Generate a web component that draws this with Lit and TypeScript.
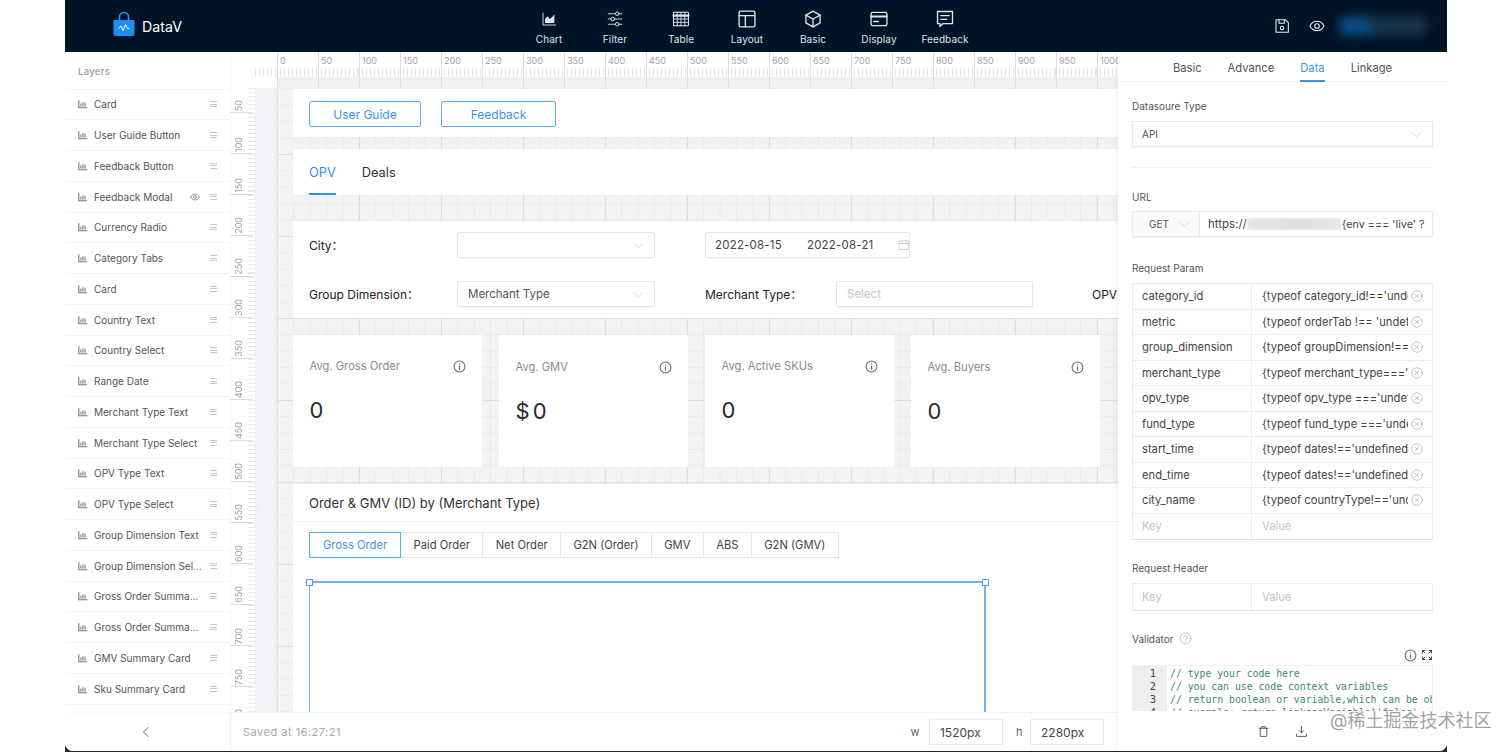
import { LitElement, html, css, svg } from "lit";
import { customElement } from "lit/decorators.js";

const layers = ["Card","User Guide Button","Feedback Button","Feedback Modal","Currency Radio","Category Tabs","Card","Country Text","Country Select","Range Date","Merchant Type Text","Merchant Type Select","OPV Type Text","OPV Type Select","Group Dimension Text","Group Dimension Select","Gross Order Summary Card","Gross Order Summary Card","GMV Summary Card","Sku Summary Card"];
const params = [
  ["category_id","{typeof category_id!=='undefined'"],
  ["metric","{typeof orderTab !== 'undefined'"],
  ["group_dimension","{typeof groupDimension!=='undefined'"],
  ["merchant_type","{typeof merchant_type==='undefined'"],
  ["opv_type","{typeof opv_type ==='undefined'"],
  ["fund_type","{typeof fund_type ==='undefined'"],
  ["start_time","{typeof dates!=='undefined'"],
  ["end_time","{typeof dates!=='undefined'"],
  ["city_name","{typeof countryType!=='undefined'"],
];
const cards = [["Avg. Gross Order","0",false],["Avg. GMV","$ 0",true],["Avg. Active SKUs","0",false],["Avg. Buyers","0",true]] as const;
const chartTabs = ["Gross Order","Paid Order","Net Order","G2N (Order)","GMV","ABS","G2N (GMV)"];
const hLabels = Array.from({length:21},(_,i)=>i*50);
const vLabels = Array.from({length:16},(_,i)=>(i+1)*50);

const s = (size:number, body:unknown, cls="") => html`<svg class=${cls} width=${size} height=${size} viewBox="0 0 24 24" fill="none" stroke="currentColor" stroke-width="1.6" stroke-linecap="round" stroke-linejoin="round">${body}</svg>`;
const navIcons: Record<string,[number,unknown]> = {
  Chart:[16,svg`<path d="M3 3v18h19" stroke-width="1.4"/><path d="M6 18v-6l4-4 3 4 4-3 3-4v13z" fill="currentColor" stroke="none"/>`],
  Filter:[18,svg`<path d="M3 5h18M3 12h18M3 19h18" stroke-width="1.2"/><circle cx="15" cy="5" r="2.4" fill="#001428" stroke-width="1.3"/><circle cx="9" cy="12" r="2.4" fill="#001428" stroke-width="1.3"/><circle cx="15" cy="19" r="2.4" fill="#001428" stroke-width="1.3"/>`],
  Table:[18,svg`<rect x="2" y="3" width="20" height="18" rx="1" stroke-width="1.4"/><path d="M2 7.5h20" stroke-width="3"/><path d="M2 12h20M2 16.5h20M7 3v18M12 3v18M17 3v18" stroke-width="1.2"/>`],
  Layout:[20,svg`<rect x="2.5" y="2.5" width="19" height="19" rx="2"/><path d="M2.5 8h19M10 8v13.5"/>`],
  Basic:[20,svg`<path d="M12 2.5l8.5 4.8v9.4L12 21.5l-8.5-4.8V7.3z"/><path d="M3.5 7.3L12 12l8.5-4.7M12 12v9.5"/>`],
  Display:[20,svg`<rect x="2.5" y="4" width="19" height="16" rx="2"/><path d="M2.5 9h19" stroke-width="2.2"/><path d="M6 15h5" stroke-width="2"/>`],
  Feedback:[20,svg`<path d="M3 3h18v14.5H9.5L6 21v-3.500H3z"/><path d="M7 8h10M7 12.500h7"/>`],
};
const chartIco = () => s(10,svg`<path d="M2 3v18h20M7 18v-7M12 18V8M17 18v-9" stroke-width="2.6" stroke-linecap="butt"/>`,"lico");
const grip = () => html`<span class="grip"></span>`;
const chev = () => s(11,svg`<path d="M3 8l9 9 9-9" stroke-width="1.2"/>`,"chev");
const info = () => s(13,svg`<circle cx="12" cy="12" r="10" stroke-width="1.9"/><path d="M12 11v6M12 7v.5" stroke-width="2"/>`,"info");
const xc = () => s(12,svg`<circle cx="12" cy="12" r="10.500" stroke-width="1.3"/><path d="M8.500 8.500l7 7M15.500 8.500l-7 7" stroke-width="1.3"/>`,"xc");

@customElement("app-root")
export class AppRoot extends LitElement {
  static styles = css`
    :host{display:block;width:1512px;height:752px;background:#fff;font-family:Inter,"Noto Sans CJK SC",sans-serif;color:#333;overflow:hidden;position:relative}
    *{box-sizing:border-box}
    svg{display:block;flex:none}
    .app{margin:0 65px;height:752px;background:#1f2430;display:flex;flex-direction:column;border-radius:0}
    header{height:52px;flex:none;background:#001428;display:flex;align-items:center;color:#e8edf2}
    .logo{width:451px;padding-left:48px;display:flex;align-items:center;gap:7px;font-size:14.200px;color:#fff}
    .logo svg{margin-bottom:4px}
    nav{display:flex}
    .ni{width:66px;height:52px;display:flex;flex-direction:column;align-items:center;font-size:10px;letter-spacing:.1px;color:#dfe5eb}
    .ni .ic{height:33px;display:flex;align-items:center;padding-top:5px}
    .ni span{line-height:12px}
    .acts{margin-left:auto;display:flex;align-items:center;width:165px;padding-left:9px;gap:19px;margin-right:17px}
    .blur{width:88px;height:20px;border-radius:8px;margin-left:-5px;background:linear-gradient(90deg,#0c4a80 0 30%,#18334c 40% 100%);filter:blur(5px)}
    .main{flex:1;display:flex;background:#fff;border-radius:0 0 8px 8px;overflow:hidden;margin-bottom:1px;min-height:0}
    .left{width:165px;flex:none;display:flex;flex-direction:column;background:#fff;box-shadow:1px 0 2px rgba(0,0,0,.04);z-index:2}
    .ltitle{height:37.500px;flex:none;padding:14px 0 0 13px;font-size:9.500px;font-weight:500;color:#9a9a9a;letter-spacing:.3px;border-bottom:1px solid #f5f5f5}
    .row{height:30.750px;flex:none;display:flex;align-items:center;padding:0 13px;border-bottom:1px solid #f5f5f5;font-size:10px;color:#555;gap:6px}
    .row .nm{flex:1;min-width:0;white-space:nowrap;overflow:hidden;text-overflow:ellipsis}
    .lico{color:#777}
    .grip{width:7px;height:6px;flex:none;margin-left:2px;border-top:1px solid #c6c6c6;border-bottom:1px solid #c6c6c6;position:relative}
    .grip::after{content:"";position:absolute;left:0;right:0;top:1.500px;height:1px;background:#c6c6c6}
    .eye{color:#888;margin-right:2px}
    .lfoot{margin-top:auto;height:39px;flex:none;display:flex;align-items:center;justify-content:center;color:#333;border-top:1px solid #fafafa;padding-right:4px}
    .center{flex:1;min-width:0;display:flex;flex-direction:column}
    .stage{flex:1;min-height:0;display:grid;grid-template-columns:47px 1fr;grid-template-rows:36px 1fr;overflow:hidden}
    .hr{grid-column:1 / 3;display:flex;padding-left:47px;overflow:hidden;background:
      linear-gradient(#fff,#fff) 0 0 / 25px 100% no-repeat,
      repeating-linear-gradient(90deg,#e8e8e8 0 1px,transparent 1px 4.100px) 25px 16px / 100% 9px no-repeat,
      linear-gradient(90deg,#fff 0 47px,#f0f0f0 47px) 0 25px / 100% 11px no-repeat,
      #fff}
    .hr div{width:41px;flex:none;border-left:1px solid #dedede;font-size:9px;color:#a3a3a3;padding:4px 0 0 2px;line-height:10px}
    .vr{overflow:hidden;background:
      repeating-linear-gradient(180deg,#e8e8e8 0 1px,transparent 1px 4.100px) 18px 0 / 7px 100% no-repeat,
      linear-gradient(90deg,#fff 0 25px,#f0f1f4 25px,#f4f5f7 40px,#eceded 47px)}
    .vr div{height:41px;width:23px;border-bottom:1px solid #dedede;font-size:9px;color:#a3a3a3;display:flex;align-items:flex-end;padding:0 0 1px 4px}
    .vr div:first-child{height:25px}
    .vr div span{writing-mode:vertical-rl;transform:rotate(180deg);line-height:10px;display:block}
    .page{min-width:0;overflow:hidden;padding:1px 0 0 16px;background-color:#f3f3f3;background-image:
      linear-gradient(90deg,#dedede 1px,transparent 1px),linear-gradient(180deg,#dedede 1px,transparent 1px),
      linear-gradient(90deg,#eaeaea 1px,transparent 1px),linear-gradient(180deg,#eaeaea 1px,transparent 1px);
      background-size:82px 82px,82px 82px,16.400px 16.400px,16.400px 16.400px;background-position:0 66px}
    .sec{background:#fff;margin-left:0}
    .btns{height:48px;display:flex;align-items:center;gap:20px;padding:2px 0 0 16px;margin-bottom:12px}
    .btn{height:26px;border:1px solid #5aaef0;border-radius:2px;color:#3a95ea;font-size:12px;display:flex;align-items:center;justify-content:center;width:112px}
    .btn.b2{width:115px}
    .tabs{height:46px;display:flex;gap:26px;padding-left:16px;margin-bottom:26px;font-size:12.800px;color:#333}
    .tabs div{height:46px;display:flex;align-items:center;border-bottom:2px solid transparent;padding-top:2px}
    .tabs .on{color:#2f8fea;border-bottom-color:#2f8fea}
    .filters{height:97px;padding:11px 0 0 16px;display:grid;grid-template-columns:148px 198px 50px 131px 197px 59px 60px;grid-template-rows:26px 26px;row-gap:23px;margin-bottom:17px;font-size:12px;color:#222;align-items:center;white-space:nowrap}
    .fl{padding-bottom:2px}
    .inp{height:26px;border:1px solid #e6e6e6;box-shadow:0 1px 1px rgba(0,0,0,.03);border-radius:2px;display:flex;align-items:center;padding:0 10px;font-size:11.500px;color:#555}
    .chev{color:#bbb}
    .inp .chev{margin-left:auto}
    .date{width:205px;grid-column:span 3;color:#444;font-size:11.500px;padding:0 9px;letter-spacing:.2px;gap:25px}
    .date svg{color:#bbb;margin-left:auto}
    .ph{color:#c4c4c4}
    .cards{display:flex;gap:17px;height:132px;margin-bottom:17px}
    .card{width:189px;background:#fff;padding:24px 16px 0 16.500px}
    .card.low{padding-top:25px}
    .ct{display:flex;justify-content:space-between;align-items:center;font-size:11.200px;color:#8a8a8a;height:14px}
    .info{color:#666}
    .val{margin-top:23px;font-size:22px;line-height:28px;color:#2a2a2a;font-weight:400;word-spacing:-3px}
    .chart{height:240px}
    .ch{height:38px;padding-left:16px;display:flex;align-items:center;font-size:13px;color:#333;border-bottom:1px solid #f2f2f2}
    .seg{display:flex;margin:10px 0 23px 16px;height:26px;font-size:11.200px;color:#444}
    .seg div{display:flex;align-items:center;border:1px solid #e5e5e5;border-left:none;padding:0 12.400px;white-space:nowrap}
    .seg div.on{border:1px solid #5aaef0;color:#3a95ea;padding:0 13px}
    .sel{position:relative;margin-left:16px;width:677px;height:200px;border:1px solid #70b4ec;border-width:2px 2px 0 1.500px}
    .h{position:absolute;width:7px;height:7px;background:#fff;border:1px solid #4a9fe6;top:-4px}
    .h.a{left:-4px}.h.b{right:-5px}
    .status{height:39px;flex:none;display:flex;align-items:center;background:#fff;border-top:1px solid #f0f0f0;border-left:1px solid #f4f4f4;padding-left:12px;font-size:11px;color:#a8a8a8;letter-spacing:.5px}
    .status .w{margin-left:auto;color:#666;margin-right:9px}
    .status .h2{color:#666;margin:0 7px 0 13px}
    .pi{height:26px;width:74px;border:1px solid #e8e8e8;display:flex;align-items:center;padding-left:10px;font-size:12px;color:#444;letter-spacing:0}
    .pi.last{margin-right:14px}
    .right{width:329px;flex:none;display:flex;flex-direction:column;background:#fff;box-shadow:-2px 0 4px rgba(0,0,0,.05);z-index:2;min-height:0}
    .rt{height:30px;flex:none;display:flex;justify-content:flex-start;gap:26px;padding-left:55px;font-size:11.200px;color:#555;border-bottom:1px solid #f4f4f4}
    .rt div{display:flex;align-items:center;height:30px;border-bottom:2px solid transparent;padding-top:3px}
    .rt .on{color:#3a95ea;border-bottom-color:#3a95ea}
    .rb{flex:1;min-height:0;overflow:hidden;padding:0 14px 0 14px;font-size:11px;color:#444}
    .lab{font-size:10px;color:#555;line-height:14px}
    .lab.first{margin-top:17px}
    .f{height:26px;border:1px solid #e9e9e9;box-shadow:0 1px 2px rgba(0,0,0,.05);display:flex;align-items:center;font-size:10px;color:#555;margin-top:8px}
    .f.api{justify-content:space-between;padding:0 10px 0 9px}
    .div{height:1px;background:#f2f2f2;margin:20px 0 22px}
    .url .m{width:67px;height:100%;background:#fafafa;border-right:1px solid #e9e9e9;display:flex;align-items:center;justify-content:space-between;padding:0 9px 0 16px;font-size:10px}
    .url .v{flex:1;min-width:0;display:flex;align-items:center;font-size:11.500px;padding-left:8px;white-space:nowrap;overflow:hidden;color:#444}
    .url .tail{font-size:10.800px}
    .url{margin-top:7px}
    .smudge{width:95px;height:12px;background:linear-gradient(90deg,#e4e4e4,#dedede 60%,#e8e8e8);filter:blur(1.500px);flex:none}
    .lab.rp{margin-top:24px}
    .tbl{margin-top:8px;border:1px solid #ececec;border-bottom-color:#e2e2e2;width:301px}
    .tr{height:25.500px;display:flex;border-bottom:1px solid #ececec;font-size:11.200px;color:#444;align-items:center}
    .tr:last-child{border-bottom:none}
    .tk{width:119px;height:100%;flex:none;border-right:1px solid #ececec;display:flex;align-items:center;padding-left:9px;white-space:nowrap}
    .tv{flex:1;min-width:0;height:100%;display:flex;align-items:center;padding:0 9px 0 10px;gap:3px}
    .tv span{flex:1;min-width:0;overflow:hidden;white-space:nowrap;color:#444}
    .xc{color:#aaa}
    .pc{color:#c4c4c4}
    .lab.rh{margin-top:21px}
    .lab.va{margin-top:21px;display:flex;align-items:center;gap:5px}
    .q{color:#aaa}
    .eact{display:flex;justify-content:flex-end;gap:4px;height:19px;align-items:center;margin-top:0;color:#444}
    .ed{display:flex;height:46px;border:1px solid #f0f0f0;border-bottom:none;overflow:hidden;font-family:"DejaVu Sans Mono",monospace;font-size:9.800px;line-height:13px;padding:0}
    .gut{width:34px;flex:none;background:#eee;color:#444;text-align:right;padding:1px 11px 0 0;height:60px;font-size:10.500px}
    .code{flex:1;min-width:0;padding:1px 0 0 3px;color:#3c8a68;white-space:pre;overflow:hidden}
    .rf{height:40px;flex:none;display:flex;align-items:center;padding-left:139px;gap:25px;color:#444;background:#fff}
    .wm{position:absolute;left:1330px;top:709px;font-size:18px;line-height:24px;color:rgba(130,130,130,.75);white-space:nowrap;pointer-events:none;z-index:5}
  `;

  render() {
    return html`<div class="app">
      <header>
        <div class="logo">
          <svg width="22" height="26" viewBox="0 0 22 26"><path d="M6.500 9V6a4.500 4.500 0 0 1 9 0v3" fill="none" stroke="#2f97f5" stroke-width="1.500"/><path d="M1.500 9h19a1 1 0 0 1 1 1v13a2 2 0 0 1-2 2h-17a2 2 0 0 1-2-2V10a1 1 0 0 1 1-1z" fill="#1b8ff5"/><path d="M5.500 17.500l2.500-2.500 2 4.500 2.500-6 2 4h2" fill="none" stroke="#fff" stroke-width="1"/></svg>
          DataV
        </div>
        <nav>${Object.entries(navIcons).map(([k,[z,b]])=>html`<div class="ni"><div class="ic">${s(z,b)}</div><span>${k}</span></div>`)}</nav>
        <div class="acts">
          ${s(16,svg`<path d="M3 2.500h14l4.500 4.500v14.500H3z"/><path d="M7.500 2.500V8h8V2.500"/><circle cx="12" cy="15" r="2.500"/>`)}
          ${s(16,svg`<path d="M1.500 12C4 7 8 5 12 5s8 2 10.500 7C20 17 16 19 12 19s-8-2-10.500-7z"/><circle cx="12" cy="12" r="3.500"/>`)}
          <div class="blur"></div>
        </div>
      </header>
      <div class="main">
        <aside class="left">
          <div class="ltitle">Layers</div>
          ${layers.map((l,i)=>html`<div class="row">${chartIco()}<span class="nm">${l}</span>${i===3?s(10,svg`<path d="M1.500 12C4 7 8 5 12 5s8 2 10.500 7C20 17 16 19 12 19s-8-2-10.500-7z" stroke-width="2"/><circle cx="12" cy="12" r="3.500" stroke-width="2"/>`,"eye"):""}${grip()}</div>`)}
          <div class="lfoot">${s(12,svg`<path d="M16 3l-9 9 9 9" stroke-width="1.500"/>`)}</div>
        </aside>
        <section class="center">
          <div class="stage">
            <div class="hr">${hLabels.map(n=>html`<div>${n}</div>`)}</div>
            <div class="vr">${vLabels.map(n=>html`<div><span>${n}</span></div>`)}</div>
            <div class="page">
              <div class="sec btns"><div class="btn">User Guide</div><div class="btn b2">Feedback</div></div>
              <div class="sec tabs"><div class="on">OPV</div><div>Deals</div></div>
              <div class="sec filters">
                <div class="fl">City：</div><div class="inp">${chev()}</div><div></div>
                <div class="inp date"><span>2022-08-15</span><span>2022-08-21</span>${s(12,svg`<rect x="3" y="4" width="18" height="17" stroke-width="1.400"/><path d="M3 9h18M8 2v4M16 2v4" stroke-width="1.400"/>`)}</div>
                <div></div>
                <div class="fl">Group Dimension：</div><div class="inp"><span>Merchant Type</span>${chev()}</div><div></div>
                <div class="fl">Merchant Type：</div><div class="inp ph">Select</div><div></div><div class="fl">OPV Type：</div>
              </div>
              <div class="cards">${cards.map(([t,v,low])=>html`<div class="card ${low?"low":""}"><div class="ct"><span>${t}</span>${info()}</div><div class="val">${v}</div></div>`)}</div>
              <div class="sec chart">
                <div class="ch">Order &amp; GMV (ID) by (Merchant Type)</div>
                <div class="seg">${chartTabs.map((t,i)=>html`<div class=${i===0?"on":""}>${t}</div>`)}</div>
                <div class="sel"><i class="h a"></i><i class="h b"></i></div>
              </div>
            </div>
          </div>
          <div class="status">
            <span>Saved at 16:27:21</span>
            <span class="w">w</span><div class="pi">1520px</div>
            <span class="h2">h</span><div class="pi last">2280px</div>
          </div>
        </section>
        <aside class="right">
          <div class="rt"><div>Basic</div><div>Advance</div><div class="on">Data</div><div>Linkage</div></div>
          <div class="rb">
            <div class="lab first">Datasoure Type</div>
            <div class="f api"><span>API</span>${chev()}</div>
            <div class="div"></div>
            <div class="lab">URL</div>
            <div class="f url"><div class="m"><span>GET</span>${chev()}</div><div class="v">https://<span class="smudge"></span><span class="tail">{env === 'live' ?</span></div></div>
            <div class="lab rp">Request Param</div>
            <div class="tbl">
              ${params.map(([k,v])=>html`<div class="tr"><div class="tk">${k}</div><div class="tv"><span>${v}</span>${xc()}</div></div>`)}
              <div class="tr"><div class="tk pc">Key</div><div class="tv pc">Value</div></div>
            </div>
            <div class="lab rh">Request Header</div>
            <div class="tbl"><div class="tr"><div class="tk pc">Key</div><div class="tv pc">Value</div></div></div>
            <div class="lab va">Validator ${s(13,svg`<circle cx="12" cy="12" r="10" stroke-width="1.300"/><path d="M9 9.500a3 3 0 1 1 4.500 2.600c-1 .6-1.500 1.200-1.500 2.400M12 17.500v.5" stroke-width="1.300"/>`,"q")}</div>
            <div class="eact">${info()}${s(12,svg`<path d="M3 8V3h5M16 3h5v5M21 16v5h-5M8 21H3v-5M3 3l5 5M21 3l-5 5M21 21l-5-5M3 21l5-5" stroke-width="2"/>`)}</div>
            <div class="ed">
              <div class="gut">1<br>2<br>3<br>4</div>
              <div class="code">// type your code here
// you can use code context variables
// return boolean or variable,which can be obtained
// example: return linkageVariable!'false'</div>
            </div>
          </div>
          <div class="rf">
            ${s(13,svg`<path d="M4 6h16M6 6v15h12V6M9 6V3h6v3"/>`)}
            ${s(13,svg`<path d="M12 3v11M8 10.500l4 4 4-4M3 17v4h18v-4"/>`)}
          </div>
        </aside>
      </div>
      </div>
      <div class="wm">@稀土掘金技术社区</div>`;
  }
}
